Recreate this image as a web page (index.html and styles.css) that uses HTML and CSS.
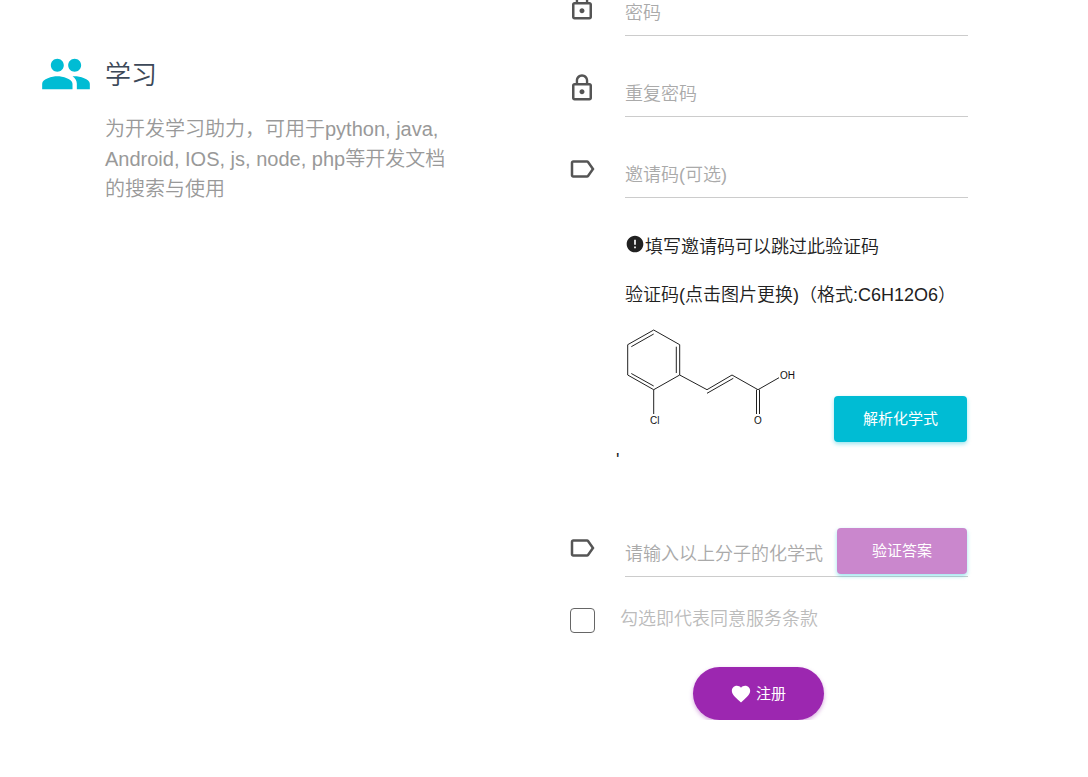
FILE: index.html
```
<!DOCTYPE html>
<html lang="zh-CN">
<head>
<meta charset="utf-8">
<title>注册</title>
<link rel="stylesheet" href="styles.css">
</head>
<body>
<main class="page">
  <section class="feature">
    <svg class="feature-icon" viewBox="0 0 24 24" aria-hidden="true"><path d="M16 11c1.66 0 2.99-1.34 2.99-3S17.66 5 16 5s-3 1.340-3 3 1.340 3 3 3zm-8 0c1.660 0 2.990-1.340 2.990-3S9.660 5 8 5 5 6.340 5 8s1.340 3 3 3zm0 2c-2.330 0-7 1.170-7 3.500V19h14v-2.500c0-2.330-4.670-3.500-7-3.500zm8 0c-.29 0-.62.02-.97.05 1.160.84 1.970 1.970 1.970 3.450V19h6v-2.500c0-2.330-4.670-3.500-7-3.500z"/></svg>
    <div class="feature-body">
      <h2 class="feature-title">学习</h2>
      <p class="feature-text">为开发学习助力，可用于python, java, Android, IOS, js, node, php等开发文档的搜索与使用</p>
    </div>
  </section>

  <form class="form">
    <div class="rows">
      <div class="row">
        <svg class="icon" viewBox="0 0 24 24" aria-hidden="true"><path d="M12 17c1.100 0 2-.9 2-2s-.9-2-2-2-2 .9-2 2 .9 2 2 2zm6-9h-1V6c0-2.760-2.240-5-5-5S7 3.240 7 6v2H6c-1.100 0-2 .9-2 2v10c0 1.100.9 2 2 2h12c1.100 0 2-.9 2-2V10c0-1.100-.9-2-2-2zM8.900 6c0-1.710 1.390-3.100 3.100-3.100s3.100 1.390 3.100 3.100v2H8.900V6zM18 20H6V10h12v10z"/></svg>
        <input class="input" type="password" placeholder="密码" aria-label="密码">
      </div>
      <div class="row">
        <svg class="icon" viewBox="0 0 24 24" aria-hidden="true"><path d="M12 17c1.100 0 2-.9 2-2s-.9-2-2-2-2 .9-2 2 .9 2 2 2zm6-9h-1V6c0-2.760-2.240-5-5-5S7 3.240 7 6v2H6c-1.100 0-2 .9-2 2v10c0 1.100.9 2 2 2h12c1.100 0 2-.9 2-2V10c0-1.100-.9-2-2-2zM8.900 6c0-1.710 1.390-3.100 3.100-3.100s3.100 1.390 3.100 3.100v2H8.900V6zM18 20H6V10h12v10z"/></svg>
        <input class="input" type="password" placeholder="重复密码" aria-label="重复密码">
      </div>
      <div class="row">
        <svg class="icon" viewBox="0 0 24 24" aria-hidden="true"><path d="M17.630 5.840C17.270 5.330 16.670 5 16 5L5 5.010C3.900 5.010 3 5.900 3 7v10c0 1.100.9 1.990 2 1.990L16 19c.67 0 1.270-.33 1.630-.84L22 12l-4.370-6.160zM16 17H5V7h11l3.550 5L16 17z"/></svg>
        <input class="input" type="text" placeholder="邀请码(可选)" aria-label="邀请码(可选)">
      </div>
    </div>

    <div class="captcha">
      <p class="note"><svg class="note-icon" viewBox="0 0 24 24" aria-hidden="true"><path d="M12 2C6.480 2 2 6.480 2 12s4.480 10 10 10 10-4.480 10-10S17.520 2 12 2zm1 15h-2v-2h2v2zm0-4h-2V7h2v6z"/></svg>填写邀请码可以跳过此验证码</p>
      <p class="note">验证码(点击图片更换)（格式:C6H12O6）</p>
      <div class="captcha-row">
        <svg class="molecule" viewBox="0 0 172 122" role="img" aria-label="分子结构">
          <path d="M28.700 10L54.700 24.700V55L28.700 69.700L2.700 55V24.700ZM6.300 26.700L28.700 14M51.300 26.700V53M6.300 53.500L28.700 66M28.700 69.700V94M54.700 55L82 69.700L107 55L133 69.700L154 57.700M82 73.300L108.300 58.300M131.500 69.700V94M134.500 69.700V94"/>
          <text x="25" y="104">Cl</text>
          <text x="129" y="104">O</text>
          <text x="155" y="59">OH</text>
        </svg>
        <button class="btn btn-info" type="button">解析化学式</button>
      </div>
      <p class="mark">'</p>
    </div>

    <div class="row">
      <svg class="icon" viewBox="0 0 24 24" aria-hidden="true"><path d="M17.630 5.840C17.270 5.330 16.670 5 16 5L5 5.010C3.900 5.010 3 5.900 3 7v10c0 1.100.9 1.990 2 1.990L16 19c.67 0 1.270-.33 1.630-.84L22 12l-4.370-6.160zM16 17H5V7h11l3.550 5L16 17z"/></svg>
      <input class="input" type="text" placeholder="请输入以上分子的化学式" aria-label="请输入以上分子的化学式">
      <button class="btn btn-verify" type="button">验证答案</button>
    </div>

    <label class="agree"><input class="check" type="checkbox"><span>勾选即代表同意服务条款</span></label>

    <div class="actions">
      <button class="btn btn-submit" type="submit"><svg class="heart" viewBox="0 0 24 24" aria-hidden="true"><path d="M12 21.350l-1.450-1.320C5.400 15.360 2 12.280 2 8.500 2 5.420 4.420 3 7.500 3c1.740 0 3.410.81 4.500 2.090C13.090 3.810 14.760 3 16.500 3 19.580 3 22 5.420 22 8.500c0 3.780-3.400 6.860-8.550 11.540L12 21.350z"/></svg>注册</button>
    </div>
  </form>
</main>
</body>
</html>
```
FILE: styles.css
```
* { box-sizing: border-box; }

body {
  margin: 0;
  overflow: hidden;
  background: #fff;
  color: #212121;
  font-family: "Liberation Sans", "Noto Sans CJK SC", sans-serif;
  font-size: 18px;
  font-weight: 350;
  line-height: 24px;
}

h2, p { margin: 0; }

.page {
  display: grid;
  grid-template-columns: 411fr 401fr;
  column-gap: 116px;
  align-items: start;
  margin-top: -8px;
  padding: 0 120px 0 40px;
}

.feature {
  display: flex;
  gap: 13px;
  padding-top: 56px;
}

.feature-icon {
  flex: none;
  width: 52px;
  height: 52px;
  fill: #00bcd4;
}

.feature-title {
  padding-top: 9px;
  color: #3c4858;
  font-size: 26px;
  font-weight: 350;
  line-height: 36px;
}

.feature-text {
  padding-top: 21px;
  color: #999;
  font-size: 20px;
  line-height: 30px;
}

.rows {
  display: grid;
  row-gap: 37px;
}

.row {
  position: relative;
  display: flex;
  gap: 28px;
}

.icon {
  flex: none;
  width: 30px;
  height: 30px;
  fill: #555;
}

.input {
  flex: 1;
  min-width: 0;
  height: 44px;
  padding: 0;
  border: 0;
  border-bottom: 1px solid #ccc;
  outline: 0;
  background: transparent;
  color: #555;
  font: inherit;
}

.input::placeholder {
  color: #aaa;
  opacity: 1;
}

.captcha {
  padding: 36px 0 61px 58px;
}

.note + .note { margin-top: 24px; }

.note-icon {
  width: 20px;
  height: 20px;
  vertical-align: -1px;
  fill: #212121;
}

.captcha-row {
  display: flex;
  justify-content: space-between;
  align-items: flex-end;
  padding: 13px 1px 0 0;
}

.molecule {
  flex: none;
  width: 172px;
  height: 122px;
  cursor: pointer;
}

.molecule path {
  fill: none;
  stroke: #222;
  stroke-width: 1;
}

.molecule text {
  fill: #111;
  font-size: 10px;
  font-weight: 400;
}

.mark {
  margin: 6px 0 0 -9px;
}

.btn {
  display: inline-flex;
  align-items: center;
  justify-content: center;
  height: 46px;
  padding: 0 29px;
  border: 0;
  border-radius: 4px;
  color: #fff;
  font: inherit;
  font-size: 15px;
  font-weight: 400;
  cursor: pointer;
}

.btn-info {
  background: #00bcd4;
  box-shadow: 0 2px 4px rgba(0, 188, 212, 0.4);
}

.btn-verify {
  position: absolute;
  right: 1px;
  bottom: 3px;
  width: 130px;
  background: #ca87cd;
  box-shadow: 0 2px 4px rgba(0, 188, 212, 0.4);
}

.agree {
  display: flex;
  gap: 25px;
  margin: 31px 0 34px 3px;
  color: #bbb;
  line-height: 22px;
}

.check {
  flex: none;
  appearance: none;
  width: 25px;
  height: 25px;
  margin: 0;
  border: 1px solid #666;
  border-radius: 4px;
  background: #fff;
}

.check:checked { background: #9c27b0; }

.actions {
  display: flex;
  justify-content: center;
  padding-right: 18px;
}

.btn-submit {
  gap: 4px;
  height: 53px;
  padding: 0 38px 0 37px;
  border-radius: 30px;
  background: #9c27b0;
  box-shadow: 0 2px 4px rgba(156, 39, 176, 0.4);
}

.heart {
  width: 22px;
  height: 22px;
  fill: #fff;
}
```
